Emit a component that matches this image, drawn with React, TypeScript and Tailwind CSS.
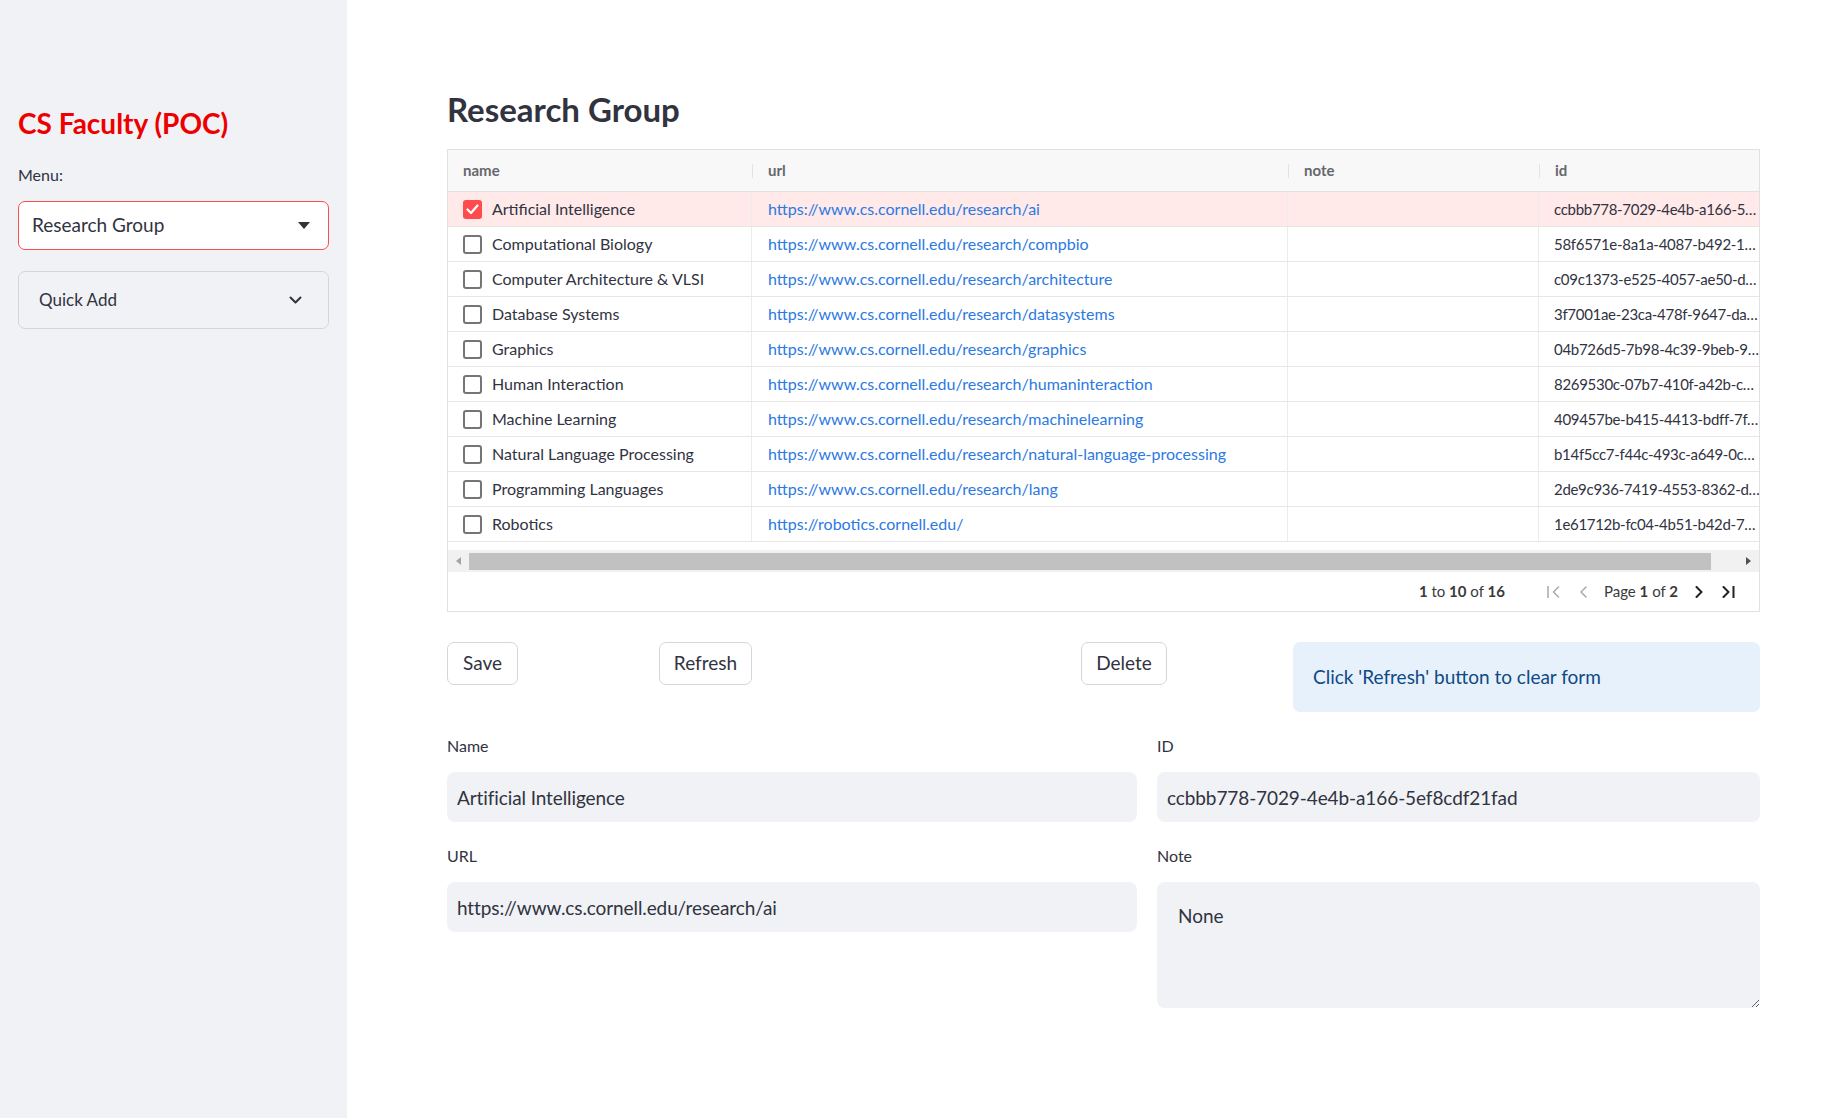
import React from 'react';

type Row = { name: string; url: string; id: string };

const rows: Row[] = [
  { name: 'Artificial Intelligence', url: 'https://www.cs.cornell.edu/research/ai', id: 'ccbbb778-7029-4e4b-a166-5…' },
  { name: 'Computational Biology', url: 'https://www.cs.cornell.edu/research/compbio', id: '58f6571e-8a1a-4087-b492-1…' },
  { name: 'Computer Architecture & VLSI', url: 'https://www.cs.cornell.edu/research/architecture', id: 'c09c1373-e525-4057-ae50-d…' },
  { name: 'Database Systems', url: 'https://www.cs.cornell.edu/research/datasystems', id: '3f7001ae-23ca-478f-9647-da…' },
  { name: 'Graphics', url: 'https://www.cs.cornell.edu/research/graphics', id: '04b726d5-7b98-4c39-9beb-9…' },
  { name: 'Human Interaction', url: 'https://www.cs.cornell.edu/research/humaninteraction', id: '8269530c-07b7-410f-a42b-c…' },
  { name: 'Machine Learning', url: 'https://www.cs.cornell.edu/research/machinelearning', id: '409457be-b415-4413-bdff-7f…' },
  { name: 'Natural Language Processing', url: 'https://www.cs.cornell.edu/research/natural-language-processing', id: 'b14f5cc7-f44c-493c-a649-0c…' },
  { name: 'Programming Languages', url: 'https://www.cs.cornell.edu/research/lang', id: '2de9c936-7419-4553-8362-d…' },
  { name: 'Robotics', url: 'https://robotics.cornell.edu/', id: '1e61712b-fc04-4b51-b42d-7…' },
];

function Checkbox({ checked }: { checked: boolean }) {
  if (checked) {
    return (
      <div className="w-[19px] h-[19px] rounded-[3px] bg-[#ff4b4b] flex items-center justify-center shrink-0">
        <svg width="13" height="11" viewBox="0 0 13 11" fill="none">
          <path d="M1.5 5.5L5 9L11.5 1.5" stroke="white" strokeWidth="2.2" strokeLinecap="round" strokeLinejoin="round" />
        </svg>
      </div>
    );
  }
  return <div className="w-[19px] h-[19px] rounded-[3px] border-2 border-[#757575] bg-white shrink-0" />;
}

function HeaderCell({ label, first }: { label: string; first?: boolean }) {
  return (
    <div className="flex items-center h-full">
      {first ? <div className="w-[15px]" /> : <div className="w-px h-[14px] bg-[#e3e3e3] mr-[15px]" />}
      <span className="text-[15px] font-bold text-[#66676b]">{label}</span>
    </div>
  );
}

function Grid() {
  return (
    <div className="w-full border border-[#e1e1e1] overflow-hidden bg-white">
      <div className="grid grid-cols-[304px_536px_251px_236px] h-[42px] bg-[#f8f8f9] border-b border-[#e1e1e1]">
        <HeaderCell label="name" first />
        <HeaderCell label="url" />
        <HeaderCell label="note" />
        <HeaderCell label="id" />
      </div>
      {rows.map((r, i) => (
        <div
          key={r.id}
          className={
            i === 0
              ? 'grid grid-cols-[304px_536px_251px_236px] h-[35px] border-b border-[#e6e6e6] bg-[#ffe9e9]'
              : 'grid grid-cols-[304px_536px_251px_236px] h-[35px] border-b border-[#e6e6e6] bg-white'
          }
        >
          <div className="flex items-center gap-[10px] pl-[15px] border-r border-[#ececec]">
            <Checkbox checked={i === 0} />
            <span className="text-[16px] text-[#31333f] whitespace-nowrap">{r.name}</span>
          </div>
          <div className="flex items-center pl-[16px] border-r border-[#ececec]">
            <span className="text-[16px] text-[#2b79e3] whitespace-nowrap">{r.url}</span>
          </div>
          <div className="border-r border-[#ececec]" />
          <div className="flex items-center pl-[15px] overflow-hidden">
            <span className="text-[15px] tracking-[-0.3px] text-[#31333f] whitespace-nowrap">{r.id}</span>
          </div>
        </div>
      ))}
      <div className="pt-[8px]">
        <div className="h-[22px] bg-[#f1f1f1] flex items-center">
          <div className="w-[21px] flex justify-center">
            <svg width="6" height="8" viewBox="0 0 6 8"><path d="M5 0L0 4L5 8Z" fill="#a3a3a3" /></svg>
          </div>
          <div className="h-[17px] w-[1242px] bg-[#c1c1c1]" />
          <div className="flex-1 flex justify-end pr-[8px]">
            <svg width="6" height="8" viewBox="0 0 6 8"><path d="M1 0L6 4L1 8Z" fill="#505050" /></svg>
          </div>
        </div>
      </div>
      <div className="h-[39px] flex items-center justify-end pr-[24px] text-[15px] text-[#3a3a3a]">
        <span>
          <b className="font-bold">1</b> to <b className="font-bold">10</b> of <b className="font-bold">16</b>
        </span>
        {/* first page */}
        <svg className="ml-[42px]" width="13" height="12" viewBox="0 0 13 12" fill="none">
          <path d="M1 0.5V11.5M11.5 1L6.5 6L11.5 11" stroke="#a9a9a9" strokeWidth="1.5" strokeLinecap="round" strokeLinejoin="round" />
        </svg>
        {/* previous page */}
        <svg className="ml-[20px]" width="7" height="12" viewBox="0 0 7 12" fill="none">
          <path d="M6 1L1 6L6 11" stroke="#a9a9a9" strokeWidth="1.5" strokeLinecap="round" strokeLinejoin="round" />
        </svg>
        <span className="ml-[17px]">
          Page <b className="font-bold">1</b> of <b className="font-bold">2</b>
        </span>
        {/* next page */}
        <svg className="ml-[17px]" width="8" height="12" viewBox="0 0 8 12" fill="none">
          <path d="M1.5 1L6.5 6L1.5 11" stroke="#222" strokeWidth="2" strokeLinecap="round" strokeLinejoin="round" />
        </svg>
        {/* last page */}
        <svg className="ml-[19px]" width="13" height="12" viewBox="0 0 13 12" fill="none">
          <path d="M1.5 1L6.5 6L1.5 11M11.5 0.5V11.5" stroke="#222" strokeWidth="2" strokeLinecap="round" strokeLinejoin="round" />
        </svg>
      </div>
    </div>
  );
}

function Field({ label, value }: { label: string; value: string }) {
  return (
    <div>
      <div className="text-[16px] text-[#31333f] h-[20px] leading-[20px]">{label}</div>
      <input
        readOnly
        value={value}
        className="mt-[16px] w-full h-[50px] rounded-[8px] bg-[#f0f2f6] px-[10px] text-[19px] tracking-[-0.1px] text-[#31333f] outline-none"
      />
    </div>
  );
}

export default function App() {
  return (
    <div className="flex min-h-[1118px] font-['Lato',sans-serif] text-[#31333f]">
      <aside className="w-[347px] shrink-0 bg-[#f0f2f6] px-[18px] pt-[106px]">
        <h1 className="text-[28px] leading-[34px] font-bold text-[#ee0000]">CS Faculty (POC)</h1>
        <div className="mt-[25px] text-[16px] leading-[20px]">Menu:</div>
        <div className="mt-[16px] h-[49px] rounded-[7px] border border-[#ff4b4b] bg-white flex items-center justify-between pl-[13px] pr-[18px]">
          <span className="text-[19px]">Research Group</span>
          <svg width="12" height="7" viewBox="0 0 12 7"><path d="M0 0H12L6 7Z" fill="#31333f" /></svg>
        </div>
        <div className="mt-[21px] h-[58px] rounded-[7px] border border-[#d6d6d9] flex items-center justify-between pl-[20px] pr-[26px]">
          <span className="text-[17px]">Quick Add</span>
          <svg width="13" height="8" viewBox="0 0 13 8" fill="none">
            <path d="M1.5 1.5L6.5 6.5L11.5 1.5" stroke="#31333f" strokeWidth="2" strokeLinecap="round" strokeLinejoin="round" />
          </svg>
        </div>
      </aside>

      <main className="flex-1 min-w-0 bg-white pl-[100px] pr-[65px] pt-[88px]">
        <h2 className="text-[33px] leading-[43px] font-bold text-[#31333f]">Research Group</h2>
        <div className="mt-[18px]">
          <Grid />
        </div>

        <div className="mt-[30px] grid grid-cols-[212px_422px_212px_1fr] items-start">
          <button className="w-[71px] h-[43px] rounded-[7px] border border-[#d6d6d9] bg-white text-[19px]">Save</button>
          <button className="w-[93px] h-[43px] rounded-[7px] border border-[#d6d6d9] bg-white text-[19px]">Refresh</button>
          <button className="w-[86px] h-[43px] rounded-[7px] border border-[#d6d6d9] bg-white text-[19px]">Delete</button>
          <div className="h-[70px] rounded-[7px] bg-[#e7f1fc] flex items-center pl-[20px] text-[19px] text-[#0f4a85]">
            Click 'Refresh' button to clear form
          </div>
        </div>

        <div className="mt-[24px] grid grid-cols-[690px_1fr] gap-x-[20px]">
          <div className="flex flex-col gap-[24px]">
            <Field label="Name" value="Artificial Intelligence" />
            <Field label="URL" value="https://www.cs.cornell.edu/research/ai" />
          </div>
          <div className="flex flex-col gap-[24px]">
            <Field label="ID" value="ccbbb778-7029-4e4b-a166-5ef8cdf21fad" />
            <div>
              <div className="text-[16px] text-[#31333f] h-[20px] leading-[20px]">Note</div>
              <textarea
                readOnly
                value="None"
                className="mt-[16px] block w-full h-[126px] rounded-[8px] bg-[#f0f2f6] px-[21px] pt-[20px] text-[19px] text-[#31333f] outline-none resize-y"
              />
            </div>
          </div>
        </div>
      </main>
    </div>
  );
}
